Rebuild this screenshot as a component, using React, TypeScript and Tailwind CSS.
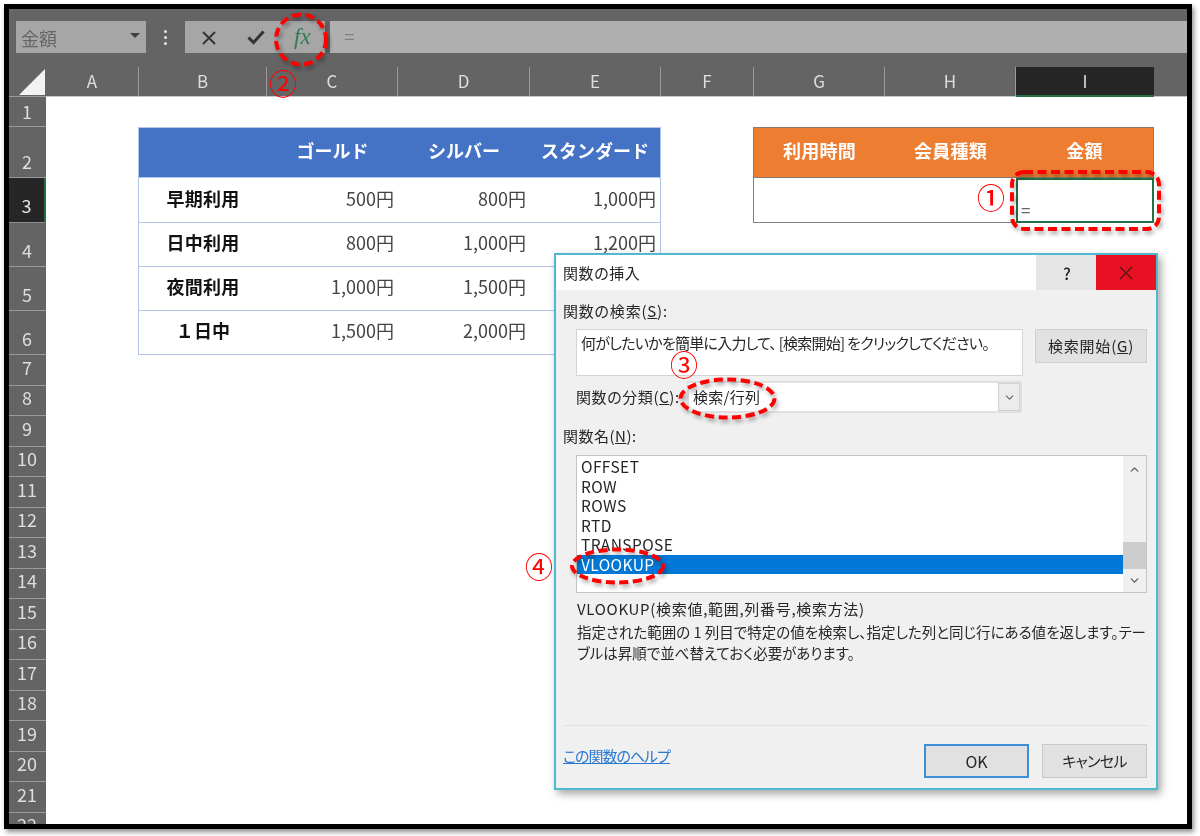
import React from "react";
import { ChevronDown, ChevronUp } from "lucide-react";

const colLabels = ["A", "B", "C", "D", "E", "F", "G", "H"];

function RowHead({ n, selected }: { n: number; selected?: boolean }) {
  return (
    <div
      className={
        selected
          ? "flex items-end justify-center bg-[#262626] border-r-[2px] border-b border-r-[#217346] border-b-[#8f8f8f] pb-[7px] text-[18px] leading-[20px] text-[#e4e4e4]"
          : n === 1
            ? "flex items-end justify-center bg-[#646464] border-b border-[#9a9a9a] pr-[1px] pb-[5px] text-[18px] leading-[20px] text-[#dedede]"
            : n <= 6
              ? "flex items-end justify-center bg-[#646464] border-b border-[#9a9a9a] pr-[1px] pb-[6.5px] text-[18px] leading-[20px] text-[#dedede]"
              : "flex items-end justify-center bg-[#646464] border-b border-[#9a9a9a] pr-[1px] pb-[8px] text-[18px] leading-[20px] text-[#dedede]"
      }
    >
      {n}
    </div>
  );
}

function BlueHead({ children, last, first }: { children?: React.ReactNode; last?: boolean; first?: boolean }) {
  return (
    <div className={`flex items-center justify-center bg-[#4472c4] border-t border-b border-[#b4c6e7] pb-[4px] text-[18px] font-bold text-white ${first ? "-ml-px border-l" : ""} ${last ? "border-r" : ""}`}>
      {children}
    </div>
  );
}

function Label({ children }: { children: React.ReactNode }) {
  return (
    <div className="-ml-px flex items-center justify-center bg-white border-l border-b border-[#b4c6e7] pb-[4px] text-[18px] font-bold tracking-[0.2px] text-[#111111]">
      {children}
    </div>
  );
}

function Value({ children, last }: { children: React.ReactNode; last?: boolean }) {
  return (
    <div className={`flex items-center justify-end bg-white border-b border-[#b4c6e7] pr-[4px] pb-[4px] text-[18px] text-[#444444] ${last ? "border-r" : ""}`}>
      {children}
    </div>
  );
}

function OrangeHead({ children, first, last }: { children: React.ReactNode; first?: boolean; last?: boolean }) {
  return (
    <div className={`flex items-center justify-center bg-[#ed7d31] border-t border-b border-[#8a7a70] pb-[4px] text-[18px] font-bold tracking-[0.2px] text-white ${first ? "-ml-px border-l" : ""} ${last ? "border-r" : ""}`}>
      {children}
    </div>
  );
}

function Blank() {
  return <div className="bg-white" />;
}

function DataRow({ n, selected, label, values }: { n: number; selected?: boolean; label: string; values: string[] }) {
  return (
    <>
      <RowHead n={n} selected={selected} />
      <Blank />
      <Label>{label}</Label>
      <Value>{values[0]}</Value>
      <Value>{values[1]}</Value>
      <Value last>{values[2]}</Value>
      <Blank />
      {selected ? (
        <>
          <div className="-ml-px bg-white border-l border-b border-[#7f7f7f]" />
          <div className="bg-white border-b border-[#7f7f7f]" />
          <div className="flex items-end bg-white border-[2px] border-[#217346] pl-[3px] pb-[1px] text-[17px] leading-[20px] text-[#666666]">=</div>
        </>
      ) : (
        <>
          <Blank />
          <Blank />
          <Blank />
        </>
      )}
      <Blank />
    </>
  );
}

function Sheet() {
  const plain = [7, 8, 9, 10, 11, 12, 13, 14, 15, 16, 17, 18, 19, 20, 21, 22];
  return (
    <div className="grid flex-1 grid-cols-[37px_93px_128px_131px_132px_131px_93px_131px_131px_138px_33px] grid-rows-[30px_30px_51px_45px_44px_44px_44px_repeat(16,30.5px)] overflow-hidden">
      <div className="relative bg-[#646464] border-b border-[#9a9a9a]">
        <div className="absolute bottom-[1px] right-[1px] h-0 w-0 border-l-[26px] border-t-[26px] border-l-transparent border-t-transparent border-b-0 border-r-[26px] border-r-[#f2f2f2]" />
      </div>
      {colLabels.map((c) => (
        <div key={c} className="flex items-center justify-center bg-[#646464] border-r border-b border-r-[#9a9a9a] border-b-[#c8c8c8] pb-[2px] text-[17px] text-[#dedede]">
          {c}
        </div>
      ))}
      <div className="flex items-center justify-center bg-[#262626] border-b-[2px] border-[#217346] pb-[1px] text-[17px] text-[#dedede]">I</div>
      <div className="bg-[#646464] border-b border-[#c8c8c8]" />

      <RowHead n={1} />
      <div className="col-span-10 bg-white" />

      <RowHead n={2} />
      <Blank />
      <BlueHead first />
      <BlueHead>ゴールド</BlueHead>
      <BlueHead>シルバー</BlueHead>
      <BlueHead last>スタンダード</BlueHead>
      <Blank />
      <OrangeHead first>利用時間</OrangeHead>
      <OrangeHead>会員種類</OrangeHead>
      <OrangeHead last>金額</OrangeHead>
      <Blank />

      <DataRow n={3} selected label="早期利用" values={["500円", "800円", "1,000円"]} />
      <DataRow n={4} label="日中利用" values={["800円", "1,000円", "1,200円"]} />
      <DataRow n={5} label="夜間利用" values={["1,000円", "1,500円", "1,800円"]} />
      <DataRow n={6} label="１日中" values={["1,500円", "2,000円", "2,500円"]} />

      {plain.map((n) => (
        <React.Fragment key={n}>
          <RowHead n={n} />
          <div className="col-span-10 bg-white" />
        </React.Fragment>
      ))}
    </div>
  );
}

function Toolbar() {
  return (
    <div className="flex h-[58px] shrink-0 items-start bg-[#646464] pt-[12px]">
      <div className="ml-[7px] flex h-[32px] w-[130px] items-center justify-between bg-[#a6a6a6] pl-[5px] pr-[6px] text-[18px] text-[#666666]">
        <span className="pt-[3px]">金額</span>
        <span className="mb-[4px] h-0 w-0 border-x-[5px] border-t-[5px] border-x-transparent border-t-[#3f3f3f]" />
      </div>
      <div className="ml-[17px] mr-[18px] flex h-[32px] w-[4px] flex-col items-center justify-center gap-[3px]">
        <span className="h-[3px] w-[3px] rounded-full bg-[#e8e8e8]" />
        <span className="h-[3px] w-[3px] rounded-full bg-[#e8e8e8]" />
        <span className="h-[3px] w-[3px] rounded-full bg-[#e8e8e8]" />
      </div>
      <div className="flex h-[32px] w-[140px] items-center bg-[#a6a6a6]">
        <svg className="ml-[16px] mt-[1px]" width="16" height="16" viewBox="0 0 16 16">
          <path d="M2 2 L14 14 M14 2 L2 14" stroke="#333333" strokeWidth="1.9" fill="none" />
        </svg>
        <svg className="ml-[30px]" width="18" height="16" viewBox="0 0 18 16">
          <path d="M1.5 8.5 L6.5 13.5 L16.5 2.5" stroke="#333333" strokeWidth="3" fill="none" />
        </svg>
        <span className="ml-[29px] pb-[2px] font-['Liberation_Serif',serif] text-[23px] italic leading-none text-[#2f7d50]">fx</span>
      </div>
      <div className="ml-[5px] flex h-[32px] flex-1 items-center bg-[#b0b0b0] pl-[14px] pb-[1px] text-[19px] text-[#808080]">=</div>
    </div>
  );
}

function Dialog() {
  return (
    <div className="absolute left-[554px] top-[253px] flex h-[537px] w-[604px] flex-col border-[2px] border-[#4fb9cf] bg-[#f0f0f0] text-[15px] leading-[20px] text-[#262626] shadow-[3px_4px_8px_rgba(0,0,0,0.35)] [font-feature-settings:'palt']">
      <div className="flex h-[35px] shrink-0 items-center bg-white pl-[7px]">
        <span className="flex-1 tracking-[0.6px]">関数の挿入</span>
        <div className="flex h-full w-[60px] items-center justify-center bg-[#e5e5e5] pl-[2px] text-[16px] font-medium text-[#222222]">?</div>
        <div className="flex h-full w-[60px] items-center justify-center bg-[#e81123]">
          <svg width="14" height="14" viewBox="0 0 14 14">
            <path d="M1 1 L13 13 M13 1 L1 13" stroke="#4a1a1a" strokeWidth="1.2" fill="none" />
          </svg>
        </div>
      </div>

      <div className="ml-[7px] mt-[11px] tracking-[0.8px]">関数の検索(<span className="underline">S</span>):</div>

      <div className="ml-[20px] mt-[8px] flex items-start">
        <div className="h-[47px] w-[447px] border border-[#d4d4d4] bg-white px-[4px] py-[3px] tracking-[-0.75px] whitespace-pre">
          何がしたいかを簡単に入力して、 [検索開始] をクリックしてください。
        </div>
        <div className="ml-[12px] flex h-[34px] w-[112px] items-center justify-center border border-[#d0d0d0] bg-[#e1e1e1] tracking-[0.8px]">
          検索開始(<span className="underline">G</span>)
        </div>
      </div>

      <div className="ml-[20px] mt-[5px] flex h-[32px] items-center">
        <div className="w-[111px] whitespace-nowrap tracking-[0.6px]">関数の分類(<span className="underline">C</span>):</div>
        <div className="flex h-full w-[335px] border-[2px] border-[#e0e0e0] bg-white pl-[4px]">
          <span className="flex-1 self-center tracking-[0.3px]">検索/行列</span>
          <div className="flex w-[22px] items-center justify-center border border-[#d0d0d0] bg-[#ececec]">
            <ChevronDown size={13} className="text-[#666666]" />
          </div>
        </div>
      </div>

      <div className="ml-[7px] mt-[13px] tracking-[0.5px]">関数名(<span className="underline">N</span>):</div>

      <div className="ml-[20px] mt-[9px] flex h-[138px] w-[571px] border border-[#c4c4c4] bg-white">
        <div className="flex-1 pt-[1px] text-[15.5px] leading-[19.5px] tracking-[0.4px]">
          <div className="pl-[4px]">OFFSET</div>
          <div className="pl-[4px]">ROW</div>
          <div className="pl-[4px]">ROWS</div>
          <div className="pl-[4px]">RTD</div>
          <div className="pl-[4px]">TRANSPOSE</div>
          <div className="bg-[#0078d7] pl-[4px] text-white">VLOOKUP</div>
        </div>
        <div className="flex w-[23px] flex-col items-center bg-[#f0f0f0]">
          <div className="flex h-[26px] items-center justify-center">
            <ChevronUp size={13} strokeWidth={2.5} className="text-[#606060]" />
          </div>
          <div className="mt-[60px] h-[27px] w-full bg-[#cdcdcd]" />
          <div className="flex flex-1 items-center justify-center">
            <ChevronDown size={13} strokeWidth={2.5} className="text-[#606060]" />
          </div>
        </div>
      </div>

      <div className="ml-[21px] mt-[6px] whitespace-nowrap tracking-[0.7px]">VLOOKUP(検索値,範囲,列番号,検索方法)</div>
      <div className="ml-[21px] mt-[2px] whitespace-nowrap text-[14.5px] leading-[21px]">
        指定された範囲の 1 列目で特定の値を検索し、指定した列と同じ行にある値を返します。テー
        <br />
        ブルは昇順で並べ替えておく必要があります。
      </div>

      <div className="flex-1" />
      <div className="mx-[7px] border-t border-[#e3e3e3]" />

      <div className="flex h-[62px] shrink-0 items-start pl-[7px] pr-[9px] pt-[18px]">
        <span className="mt-[2px] flex-1 tracking-[-1px] text-[#2a78d0] underline">この関数のヘルプ</span>
        <div className="flex h-[34px] w-[105px] items-center justify-center border-[2px] border-[#3d8fd8] bg-[#e1e1e1] text-[16px]">OK</div>
        <div className="ml-[13px] flex h-[34px] w-[105px] items-center justify-center border border-[#c8c8c8] bg-[#e1e1e1] tracking-[-0.7px]">キャンセル</div>
      </div>
    </div>
  );
}

function Annotations() {
  const dash = { stroke: "#ff0000", strokeWidth: 4, strokeDasharray: "9 4.5", fill: "none" };
  return (
    <>
      <svg className="pointer-events-none absolute left-0 top-0 drop-shadow-[2px_3px_2px_rgba(0,0,0,0.35)]" width="1200" height="836" viewBox="0 0 1200 836">
        <ellipse cx="301" cy="39.5" rx="25" ry="25" {...dash} />
        <rect x="1012" y="172" width="147" height="57" rx="12" {...dash} />
        <ellipse cx="727.5" cy="398.5" rx="47" ry="19" {...dash} />
        <ellipse cx="617.5" cy="566" rx="45.5" ry="16.5" {...dash} />
      </svg>
      <span className="absolute left-[977px] top-[177px] text-[28px] font-medium leading-[40px] text-[#ff0000]">①</span>
      <span className="absolute left-[269px] top-[63px] text-[28px] leading-[40px] text-[#ff0000]">②</span>
      <span className="absolute left-[670px] top-[344px] text-[28px] leading-[40px] text-[#ff0000]">③</span>
      <span className="absolute left-[525px] top-[546px] text-[28px] leading-[40px] text-[#ff0000]">④</span>
    </>
  );
}

export default function App() {
  return (
    <div className="relative h-[836px] w-[1200px] overflow-hidden bg-white pl-[4px] pt-[4px] font-['Noto_Sans_CJK_JP','Noto_Sans',sans-serif] blur-[0.5px]">
      <div className="flex h-[825px] w-[1188px] flex-col overflow-hidden border-[5px] border-black shadow-[2px_3px_5px_rgba(0,0,0,0.45)]">
        <Toolbar />
        <Sheet />
      </div>
      <Dialog />
      <Annotations />
    </div>
  );
}
